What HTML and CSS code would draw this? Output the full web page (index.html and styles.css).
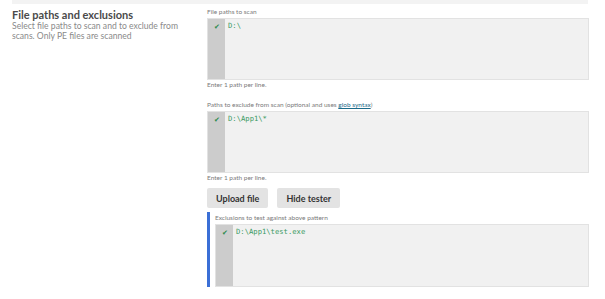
FILE: index.html
```html
<!DOCTYPE html>
<html lang="en">
<head>
  <meta charset="UTF-8" />
  <title>File paths and exclusions</title>
  <link rel="stylesheet" href="styles.css">
</head>
<body>
  <div class="top-band"></div>
  <div class="section">
    <div class="intro">
      <h2>File paths and exclusions</h2>
      <p>Select file paths to scan and to exclude from scans. Only PE files are scanned</p>
    </div>

    <div class="fields">
      <label>File paths to scan</label>
      <div class="editor">
        <div class="gutter"><span class="tick">&#10004;</span></div>
        <div class="code">D:\</div>
      </div>
      <div class="hint">Enter 1 path per line.</div>

      <label class="gap">Paths to exclude from scan (optional and uses <a href="#">glob syntax</a>)</label>
      <div class="editor">
        <div class="gutter"><span class="tick">&#10004;</span></div>
        <div class="code">D:\App1\*</div>
      </div>
      <div class="hint">Enter 1 path per line.</div>

      <div class="actions">
        <button class="btn">Upload file</button>
        <button class="btn">Hide tester</button>
      </div>

      <div class="tester">
        <label>Exclusions to test against above pattern</label>
        <div class="editor">
          <div class="gutter"><span class="tick">&#10004;</span></div>
          <div class="code">D:\App1\test.exe</div>
        </div>
      </div>
    </div>
  </div>
</body>
</html>
```

FILE: styles.css
```css
body {
  margin: 0;
  padding: 0 16px 0 12px;
  background: #fff;
  font-family: Lato, sans-serif;
  color: #444;
}
.top-band {
  width: 576px;
  height: 4px;
  background: #f3f3f3;
}
.section {
  display: flex;
}
.intro {
  width: 195px;
  padding-top: 4px;
}
.intro h2 {
  margin: 0;
  font-size: 11px;
  line-height: 13px;
  color: #4a4a4a;
  font-weight: bold;
}
.intro p {
  margin: 0;
  max-width: 172px;
  font-size: 8.6px;
  line-height: 10px;
  color: #8a8a8a;
}
.fields {
  width: 382px;
  padding-top: 4px;
}
label {
  display: block;
  font-size: 6.5px;
  line-height: 8px;
  color: #7a7a7a;
  margin-bottom: 2px;
}
label.gap {
  margin-top: 12px;
}
label a {
  color: #1c6b8a;
}
.editor {
  display: flex;
  height: 60px;
  border: 1px solid #e2e2e2;
  background: #f1f1f1;
}
.gutter {
  width: 17px;
  background: #cccccc;
  text-align: center;
}
.tick {
  display: block;
  color: #2b8a4a;
  font-size: 7px;
  line-height: 8px;
  margin-top: 3px;
}
.code {
  padding: 3px 0 0 3px;
  font-family: 'DejaVu Sans Mono', monospace;
  font-size: 7.2px;
  line-height: 8px;
  color: #3a9a62;
}
.hint {
  font-size: 6.5px;
  line-height: 8px;
  color: #7a7a7a;
  margin-top: 1px;
}
.actions {
  display: flex;
  gap: 9px;
  margin-top: 6px;
}
.btn {
  background: #e3e3e3;
  border: none;
  border-radius: 2px;
  height: 20px;
  padding: 0 9px;
  font-family: Lato, sans-serif;
  font-weight: bold;
  font-size: 9px;
  color: #333;
  cursor: pointer;
}
.tester {
  margin-top: 4px;
  border-left: 3px solid #3b6fd6;
  padding-left: 5px;
}
.tester label {
  padding-top: 2px;
}
.tester .editor {
  height: 61px;
}
```
